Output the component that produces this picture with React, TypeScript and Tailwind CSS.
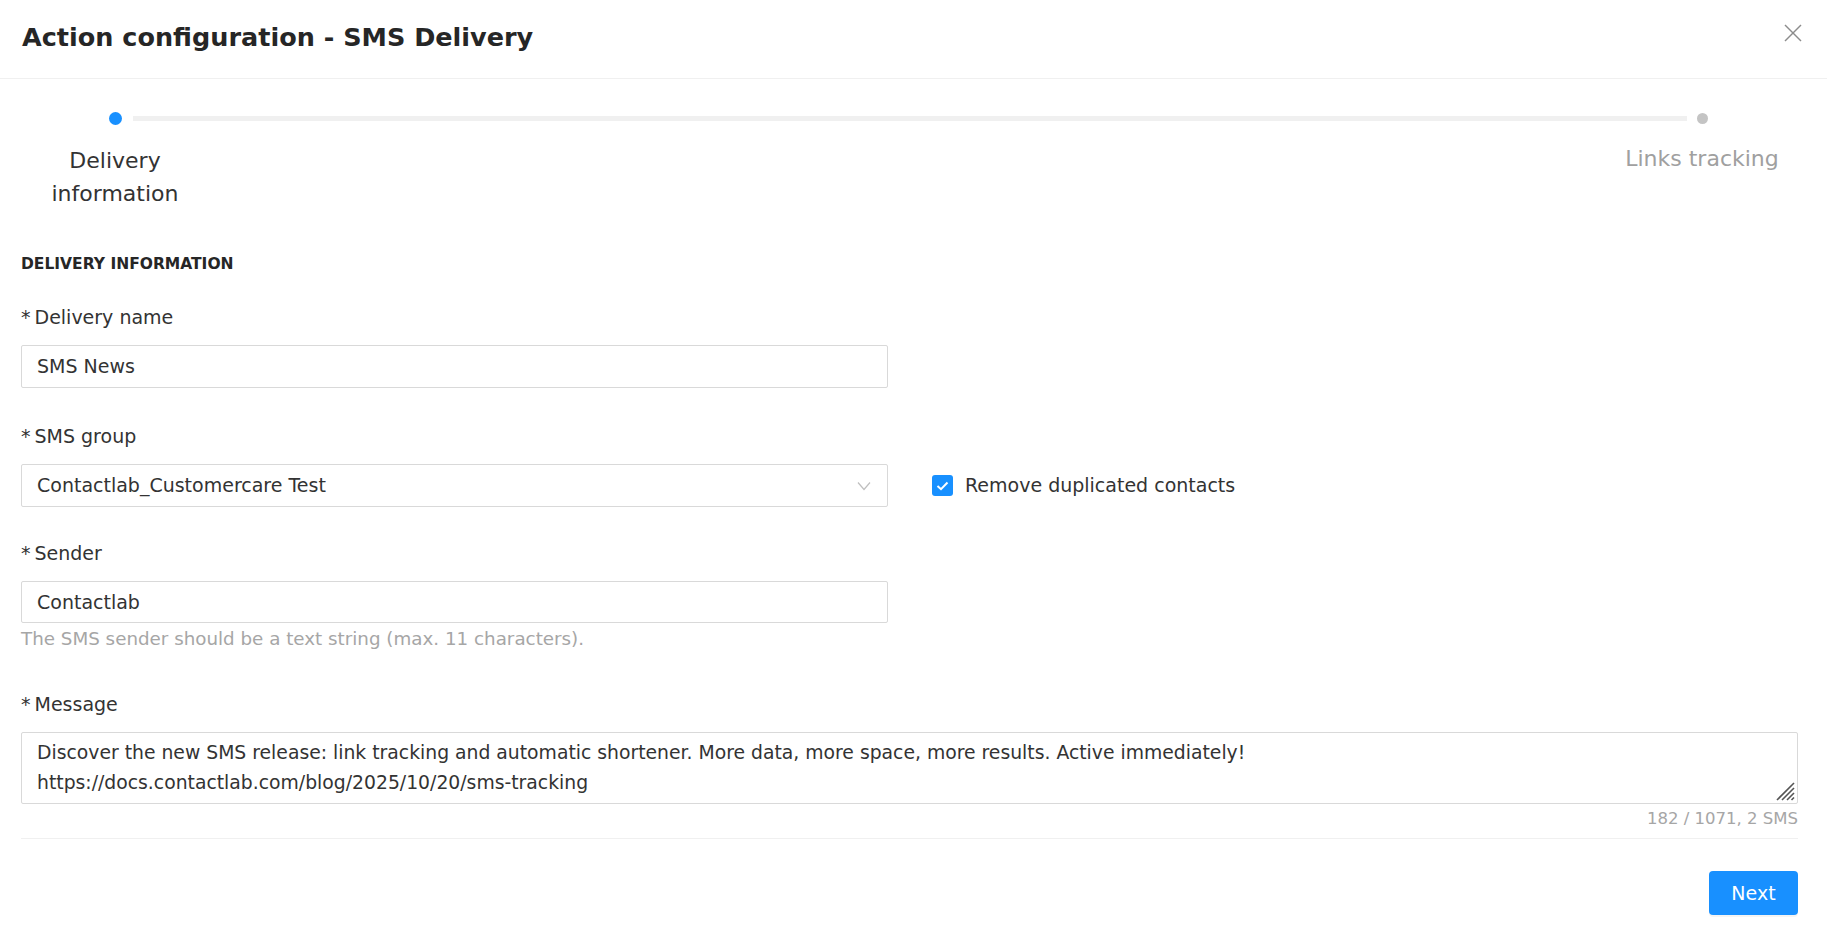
import React from 'react'

const font = { fontFamily: '"DejaVu Sans", "Liberation Sans", sans-serif' }

function Label({ children }: { children: React.ReactNode }) {
  return (
    <div className="flex items-center text-[19px] leading-[26px] text-[#333333] mb-[15px]">
      <span className="mr-[4px] text-[#333333]">*</span>
      {children}
    </div>
  )
}

function ResizeGrip() {
  return (
    <svg width="20" height="20" viewBox="0 0 20 20" className="absolute right-[2px] bottom-[2px]">
      <line x1="19" y1="2" x2="2" y2="19" stroke="#555" strokeWidth="1.6" />
      <line x1="19" y1="7" x2="7" y2="19" stroke="#555" strokeWidth="1.6" />
      <line x1="19" y1="12" x2="12" y2="19" stroke="#555" strokeWidth="1.6" />
      <line x1="19" y1="16.5" x2="16.5" y2="19" stroke="#555" strokeWidth="1.6" />
    </svg>
  )
}

export default function App() {
  return (
    <div className="w-[1827px] h-[925px] bg-white overflow-hidden" style={font}>
      {/* header */}
      <div className="h-[79px] border-b border-[#f0f0f0] flex items-center justify-between pl-[22px] pr-[25px]">
        <h1 className="text-[25.5px] font-bold text-[#262626] mt-[-3px]">Action configuration - SMS Delivery</h1>
        <svg width="18" height="18" viewBox="0 0 18 18" className="mt-[-12px]">
          <line x1="1" y1="1" x2="17" y2="17" stroke="#8c8c8c" strokeWidth="1.5" />
          <line x1="17" y1="1" x2="1" y2="17" stroke="#8c8c8c" strokeWidth="1.5" />
        </svg>
      </div>

      <div className="px-[21px] pr-[29px]">
        {/* stepper */}
        <div className="flex items-center pl-[88px] pr-[90px] mt-[33px]">
          <div className="w-[13px] h-[13px] rounded-full bg-[#1890ff]" />
          <div className="flex-1 h-[5px] bg-[#f0f0f0] ml-[11px] mr-[10px]" />
          <div className="w-[11px] h-[11px] rounded-full bg-[#c4c4c4]" />
        </div>
        <div className="flex justify-between mt-[19px]">
          <div className="w-[188px] flex justify-center">
            <div className="w-[150px] text-center text-[22px] leading-[33px] text-[#333333]">
              Delivery information
            </div>
          </div>
          <div className="w-[192px] text-center text-[22px] leading-[33px] text-[#a0a0a0] mt-[-2px]">
            Links tracking
          </div>
        </div>

        {/* section */}
        <div className="mt-[44px] text-[15.5px] leading-[20px] font-bold uppercase text-[#262626]">
          Delivery information
        </div>

        <div className="mt-[30px]">
          <Label>Delivery name</Label>
          <div className="w-[867px] h-[43px] border border-[#d9d9d9] rounded-[2px] flex items-center px-[15px] text-[19px] text-[#333333]">
            SMS News
          </div>
        </div>

        <div className="mt-[35px]">
          <Label>SMS group</Label>
          <div className="flex items-center">
            <div className="w-[867px] h-[43px] border border-[#d9d9d9] rounded-[2px] flex items-center justify-between pl-[15px] pr-[16px] text-[19px] text-[#333333]">
              <span>Contactlab_Customercare Test</span>
              <svg width="14" height="10" viewBox="0 0 14 10">
                <polyline points="1,1.5 7,8.5 13,1.5" fill="none" stroke="#bfbfbf" strokeWidth="1.2" />
              </svg>
            </div>
            <div className="flex items-center ml-[44px]">
              <div className="w-[21px] h-[21px] rounded-[3px] bg-[#1890ff] flex items-center justify-center">
                <svg width="13" height="10" viewBox="0 0 13 10">
                  <polyline points="1.5,5 5,8.2 11.5,1.5" fill="none" stroke="#ffffff" strokeWidth="2" />
                </svg>
              </div>
              <span className="ml-[12px] text-[19px] text-[#333333]">Remove duplicated contacts</span>
            </div>
          </div>
        </div>

        <div className="mt-[33px]">
          <Label>Sender</Label>
          <div className="w-[867px] h-[42px] border border-[#d9d9d9] rounded-[2px] flex items-center px-[15px] text-[19px] text-[#333333]">
            Contactlab
          </div>
          <div className="mt-[4px] text-[18.3px] leading-[24px] text-[#a6a6a6]">
            The SMS sender should be a text string (max. 11 characters).
          </div>
        </div>

        <div className="mt-[40px]">
          <Label>Message</Label>
          <div className="relative h-[72px] border border-[#d9d9d9] rounded-[2px] px-[15px] py-[5px] text-[18.8px] leading-[30px] text-[#333333]">
            <div>Discover the new SMS release: link tracking and automatic shortener. More data, more space, more results. Active immediately!</div>
            <div>https://docs.contactlab.com/blog/2025/10/20/sms-tracking</div>
            <ResizeGrip />
          </div>
          <div className="mt-[3px] text-right text-[16.5px] leading-[24px] text-[#a6a6a6]">182 / 1071, 2 SMS</div>
        </div>

        <div className="mt-[7px] border-t border-[#f0f0f0]" />

        <div className="flex justify-end mt-[32px]">
          <button className="w-[89px] h-[44px] rounded-[4px] bg-[#1890ff] text-white text-[19px] shadow-[0_2px_0_rgba(0,0,0,0.045)]">
            Next
          </button>
        </div>
      </div>
    </div>
  )
}
